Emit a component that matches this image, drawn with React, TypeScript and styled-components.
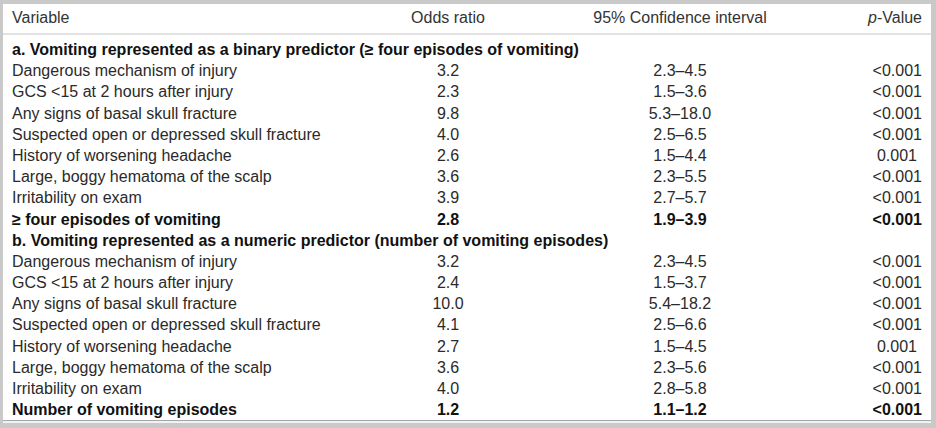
import styled, { createGlobalStyle } from 'styled-components';

type Item = {
    label: string;
    odds: string;
    ci: string;
    p: string;
    bold?: boolean;
};

type Section = {
    title: string;
    rows: Item[];
};

const sections: Section[] = [
    {
        title: 'a. Vomiting represented as a binary predictor (≥ four episodes of vomiting)',
        rows: [
            { label: 'Dangerous mechanism of injury', odds: '3.2', ci: '2.3–4.5', p: '<0.001' },
            { label: 'GCS <15 at 2 hours after injury', odds: '2.3', ci: '1.5–3.6', p: '<0.001' },
            { label: 'Any signs of basal skull fracture', odds: '9.8', ci: '5.3–18.0', p: '<0.001' },
            { label: 'Suspected open or depressed skull fracture', odds: '4.0', ci: '2.5–6.5', p: '<0.001' },
            { label: 'History of worsening headache', odds: '2.6', ci: '1.5–4.4', p: '0.001' },
            { label: 'Large, boggy hematoma of the scalp', odds: '3.6', ci: '2.3–5.5', p: '<0.001' },
            { label: 'Irritability on exam', odds: '3.9', ci: '2.7–5.7', p: '<0.001' },
            { label: '≥ four episodes of vomiting', odds: '2.8', ci: '1.9–3.9', p: '<0.001', bold: true },
        ],
    },
    {
        title: 'b. Vomiting represented as a numeric predictor (number of vomiting episodes)',
        rows: [
            { label: 'Dangerous mechanism of injury', odds: '3.2', ci: '2.3–4.5', p: '<0.001' },
            { label: 'GCS <15 at 2 hours after injury', odds: '2.4', ci: '1.5–3.7', p: '<0.001' },
            { label: 'Any signs of basal skull fracture', odds: '10.0', ci: '5.4–18.2', p: '<0.001' },
            { label: 'Suspected open or depressed skull fracture', odds: '4.1', ci: '2.5–6.6', p: '<0.001' },
            { label: 'History of worsening headache', odds: '2.7', ci: '1.5–4.5', p: '0.001' },
            { label: 'Large, boggy hematoma of the scalp', odds: '3.6', ci: '2.3–5.6', p: '<0.001' },
            { label: 'Irritability on exam', odds: '4.0', ci: '2.8–5.8', p: '<0.001' },
            { label: 'Number of vomiting episodes', odds: '1.2', ci: '1.1–1.2', p: '<0.001', bold: true },
        ],
    },
];

const App = () => {
    return (
        <>
            <GlobalStyle />
            <Frame>
                <Table>
                    <HeadRow>
                        <Label>Variable</Label>
                        <Centered>Odds ratio</Centered>
                        <Centered>95% Confidence interval</Centered>
                        <PValue>
                            <i>p</i>-Value
                        </PValue>
                    </HeadRow>
                    <Body>
                        {sections.map((section) => (
                            <Group key={section.title}>
                                <SectionTitle>{section.title}</SectionTitle>
                                {section.rows.map((row) => (
                                    <Row key={row.label} $bold={row.bold}>
                                        <Label>{row.label}</Label>
                                        <Centered>{row.odds}</Centered>
                                        <Centered>{row.ci}</Centered>
                                        <PValue $exact={!row.p.startsWith('<')}>{row.p}</PValue>
                                    </Row>
                                ))}
                            </Group>
                        ))}
                    </Body>
                </Table>
                <Foot />
            </Frame>
        </>
    );
};
export default App;

const GlobalStyle = createGlobalStyle`
    html, body {
        margin: 0;
        padding: 0;
        background: #c9c9c9;
    }
    body {
        font-family: "Liberation Sans", Arial, sans-serif;
        font-size: 16px;
        color: #2a2a2a;
    }
`;

const Frame = styled.div`
    padding: 4px 5px 0 3px;
`;

const Table = styled.div`
    background: #ffffff;
    border-bottom: 1px solid #a6a6a6;
`;

// variable | odds ratio | confidence interval | p-value
const columns = '340px 192px 272px 1fr';

const HeadRow = styled.div`
    display: grid;
    grid-template-columns: ${columns};
    padding: 3px 9px 5px 9px;
    line-height: 21px;
    color: #333333;
    border-bottom: 2px solid #e2e2e2;
`;

const Body = styled.div`
    padding: 4px 9px 0 9px;
`;

const Group = styled.div`
    display: flex;
    flex-direction: column;
`;

const SectionTitle = styled.div`
    height: 21.2px;
    line-height: 21.2px;
    font-weight: 700;
    color: #111111;
    white-space: nowrap;
`;

const Row = styled.div<{ $bold?: boolean }>`
    display: grid;
    grid-template-columns: ${columns};
    height: 21.2px;
    line-height: 21.2px;
    font-weight: ${(p) => (p.$bold ? 700 : 400)};
    color: ${(p) => (p.$bold ? '#111111' : '#2a2a2a')};
`;

const Label = styled.div`
    white-space: nowrap;
`;

const Centered = styled.div`
    text-align: center;
    white-space: nowrap;
`;

const PValue = styled.div<{ $exact?: boolean }>`
    text-align: right;
    white-space: nowrap;
    padding-right: ${(p) => (p.$exact ? '5px' : '0')};
`;

const Foot = styled.div`
    height: 2px;
    background: #f2f2f2;
`;
